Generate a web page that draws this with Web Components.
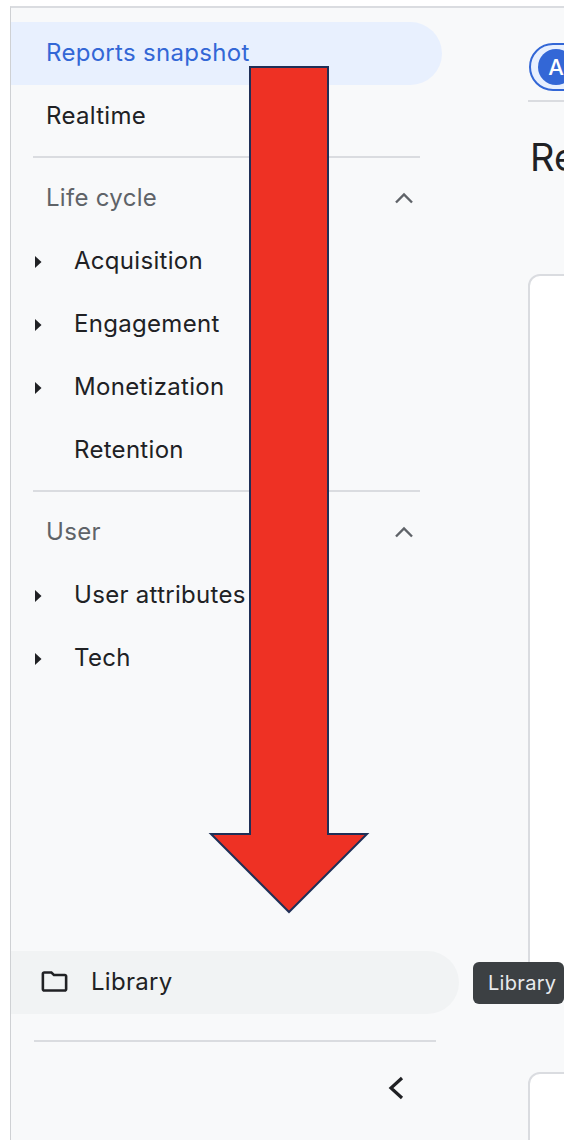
<!DOCTYPE html>
<html>
<head>
<meta charset="utf-8">
<title>Reports</title>
<style>
  html, body { margin: 0; padding: 0; background: #fff; }
  body { font-family: "Inter", "Roboto", sans-serif; }
</style>
</head>
<body>
<ga-shell>
  <ga-sidenav slot="nav">
    <ga-nav-item active>Reports snapshot</ga-nav-item>
    <ga-nav-item>Realtime</ga-nav-item>
    <ga-section title="Life cycle">
      <ga-nav-item child caret>Acquisition</ga-nav-item>
      <ga-nav-item child caret>Engagement</ga-nav-item>
      <ga-nav-item child caret>Monetization</ga-nav-item>
      <ga-nav-item child>Retention</ga-nav-item>
    </ga-section>
    <ga-section title="User">
      <ga-nav-item child caret>User attributes</ga-nav-item>
      <ga-nav-item child caret>Tech</ga-nav-item>
    </ga-section>
    <ga-nav-footer slot="footer"></ga-nav-footer>
  </ga-sidenav>
  <ga-content slot="content"></ga-content>
</ga-shell>
<ga-tooltip>Library</ga-tooltip>
<ga-arrow></ga-arrow>

<script>
/* Outer frame: grey top and left hairlines, nav and content side by side */
class GaShell extends HTMLElement {
  constructor() {
    super();
    this.attachShadow({ mode: "open" });
    this.shadowRoot.innerHTML = `
      <style>
        :host {
          display: flex;
          box-sizing: border-box;
          width: 554px;
          height: 1134px;
          margin: 6px 0 0 10px;
          background: #f8f9fa;
          border-top: 2px solid #dadce0;
          border-left: 1px solid #cfd1d4;
          overflow: hidden;
        }
      </style>
      <slot name="nav"></slot>
      <slot name="content"></slot>
    `;
  }
}

class GaSidenav extends HTMLElement {
  constructor() {
    super();
    this.attachShadow({ mode: "open" });
    this.shadowRoot.innerHTML = `
      <style>
        :host {
          display: flex;
          flex-direction: column;
          box-sizing: border-box;
          flex: 0 0 517px;
          height: 100%;
          padding-top: 14px;
        }
        .items { flex: 1; }
      </style>
      <div class="items"><slot></slot></div>
      <slot name="footer"></slot>
    `;
  }
}

class GaNavItem extends HTMLElement {
  constructor() {
    super();
    this.attachShadow({ mode: "open" });
    this.shadowRoot.innerHTML = `
      <style>
        :host {
          display: flex;
          align-items: center;
          box-sizing: border-box;
          width: 431px;
          height: 63px;
          padding: 0 0 2px 35px;
          font-size: 24px;
          letter-spacing: 0.3px;
          color: #202124;
          white-space: nowrap;
          border-radius: 0 32px 32px 0;
        }
        :host([active]) { background: #e8f0fe; color: #3367d6; }
        :host([child]) { padding-left: 63px; position: relative; }
        svg { display: none; position: absolute; left: 23px; top: 24px; }
        :host([caret]) svg { display: block; }
      </style>
      <svg width="8" height="16" viewBox="0 0 8 16"><path d="M1 2 7.500 8 1 14z" fill="#202124"/></svg>
      <slot></slot>
    `;
  }
}

class GaSection extends HTMLElement {
  constructor() {
    super();
    this.attachShadow({ mode: "open" });
    this.shadowRoot.innerHTML = `
      <style>
        :host { display: block; }
        .rule { height: 2px; width: 387px; margin: 8px 0 0 22px; background: #dadce0; }
        .head {
          display: flex;
          align-items: center;
          justify-content: space-between;
          box-sizing: border-box;
          width: 403px;
          height: 63px;
          margin-top: 9px;
          padding: 0 0 2px 35px;
          font-size: 24px;
          letter-spacing: 0.3px;
          color: #5f6368;
        }
        svg { display: block; }
      </style>
      <div class="rule"></div>
      <div class="head">
        <span class="label"></span>
        <svg width="20" height="12" viewBox="0 0 20 12"><path d="M2 10.500 10 2.500l8 8" fill="none" stroke="#5f6368" stroke-width="2.400"/></svg>
      </div>
      <slot></slot>
    `;
  }
  connectedCallback() {
    this.shadowRoot.querySelector(".label").textContent = this.getAttribute("title");
  }
}

class GaNavFooter extends HTMLElement {
  constructor() {
    super();
    this.attachShadow({ mode: "open" });
    this.shadowRoot.innerHTML = `
      <style>
        :host { display: block; height: 189px; }
        .library {
          display: flex;
          align-items: center;
          gap: 21px;
          box-sizing: border-box;
          width: 448px;
          height: 63px;
          padding: 0 0 2px 28px;
          font-size: 24px;
          letter-spacing: 0.3px;
          color: #202124;
          background: #f1f3f4;
          border-radius: 0 32px 32px 0;
        }
        .rule { height: 2px; width: 402px; margin: 26px 0 0 23px; background: #dadce0; }
        .collapse { display: flex; justify-content: flex-end; width: 393px; margin-top: 34px; }
        svg { display: block; }
      </style>
      <div class="library">
        <svg width="31" height="31" viewBox="0 0 24 24"><path d="M20 6h-8l-2-2H4c-1.100 0-2 .9-2 2v12c0 1.100.9 2 2 2h16c1.100 0 2-.9 2-2V8c0-1.100-.9-2-2-2zm0 12H4V6h5.170l2 2H20v10z" fill="#202124"/></svg>
        <span>Library</span>
      </div>
      <div class="rule"></div>
      <div class="collapse">
        <svg width="16" height="24" viewBox="0 0 16 24"><path d="M14 2 3 12l11 10" fill="none" stroke="#202124" stroke-width="3.200"/></svg>
      </div>
    `;
  }
}

/* Right column, cut off by the edge of the shot */
class GaContent extends HTMLElement {
  constructor() {
    super();
    this.attachShadow({ mode: "open" });
    this.shadowRoot.innerHTML = `
      <style>
        :host { display: block; flex: 0 0 auto; width: 36px; overflow: hidden; white-space: nowrap; }
        .tabs { height: 92px; box-sizing: border-box; padding: 35px 0 0 1px; width: 200px; }
        .chip {
          display: flex;
          align-items: center;
          box-sizing: border-box;
          width: 160px;
          height: 48px;
          padding-left: 7px;
          background: #e8f0fe;
          border: 2px solid #3367d6;
          border-radius: 24px;
        }
        .avatar {
          display: flex;
          flex: none;
          align-items: center;
          justify-content: center;
          width: 36px;
          height: 36px;
          border-radius: 50%;
          background: #3367d6;
          color: #fff;
          font-size: 22px;
          font-weight: 500;
        }
        .rule { height: 2px; width: 200px; background: #dadce0; }
        h1 { margin: 33px 0 0 2px; font-size: 38px; line-height: 44px; font-weight: 400; color: #202124; }
        .card { box-sizing: border-box; width: 200px; background: #fff; border: 2px solid #dadce0; border-radius: 12px; }
        .one { height: 726px; margin-top: 95px; }
        .two { height: 200px; margin-top: 72px; }
      </style>
      <div class="tabs"><div class="chip"><div class="avatar">A</div></div></div>
      <div class="rule"></div>
      <h1>Re</h1>
      <div class="card one"></div>
      <div class="card two"></div>
    `;
  }
}

class GaTooltip extends HTMLElement {
  constructor() {
    super();
    this.attachShadow({ mode: "open" });
    this.shadowRoot.innerHTML = `
      <style>
        :host {
          position: absolute;
          left: 473px;
          top: 962px;
          display: flex;
          align-items: center;
          box-sizing: border-box;
          width: 91px;
          height: 42px;
          padding-left: 15px;
          font-size: 20px;
          letter-spacing: 0.3px;
          color: #e8eaed;
          background: #3c4043;
          border-radius: 6px;
          overflow: hidden;
        }
      </style>
      <slot></slot>
    `;
  }
}

/* Red annotation arrow drawn over the screenshot */
class GaArrow extends HTMLElement {
  constructor() {
    super();
    this.attachShadow({ mode: "open" });
    this.shadowRoot.innerHTML = `
      <style>
        :host { position: absolute; left: 205px; top: 60px; display: block; width: 170px; height: 860px; }
        svg { display: block; }
      </style>
      <svg width="170" height="860" viewBox="205 60 170 860">
        <path d="M250 67H328V834H367L289 912 211 834H250Z" fill="#ee3124" stroke="#1f2f57" stroke-width="2"/>
      </svg>
    `;
  }
}

customElements.define("ga-shell", GaShell);
customElements.define("ga-sidenav", GaSidenav);
customElements.define("ga-nav-item", GaNavItem);
customElements.define("ga-section", GaSection);
customElements.define("ga-nav-footer", GaNavFooter);
customElements.define("ga-content", GaContent);
customElements.define("ga-tooltip", GaTooltip);
customElements.define("ga-arrow", GaArrow);
</script>
</body>
</html>
